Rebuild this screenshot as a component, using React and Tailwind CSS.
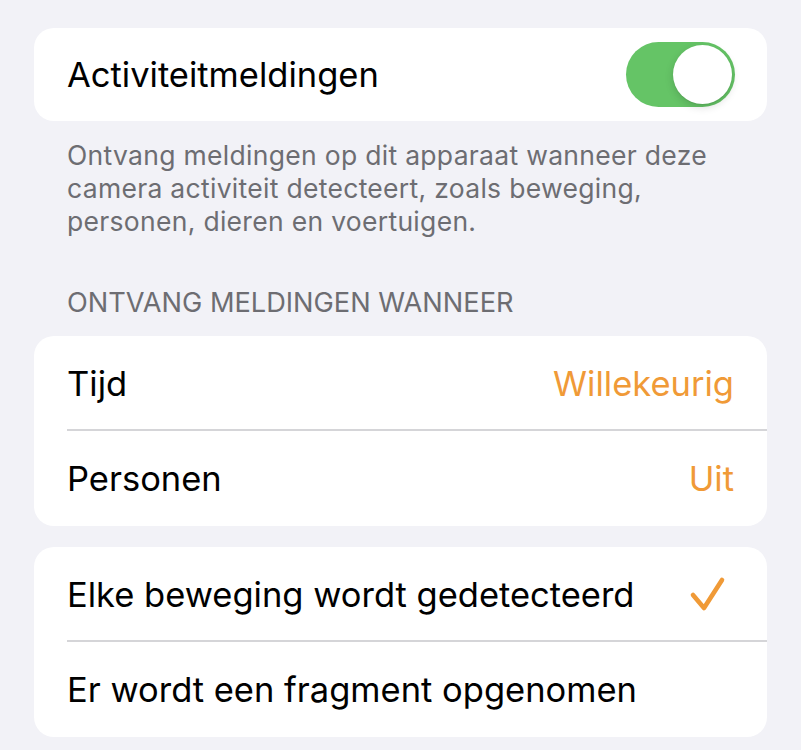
import React from "react";

function Toggle() {
  return (
    <div className="relative w-[109px] h-[65px] rounded-full bg-[#65c466]">
      <div className="absolute right-[3px] top-[3px] w-[59px] h-[59px] rounded-full bg-white shadow-[0_3px_8px_rgba(0,0,0,0.15),0_1px_1px_rgba(0,0,0,0.06)]" />
    </div>
  );
}

function Check() {
  return (
    <svg width="40" height="40" viewBox="0 0 40 40" className="block">
      <path d="M5 20 L16 33 L34 5" fill="none" stroke="#f09a37" strokeWidth="4.6" strokeLinecap="round" strokeLinejoin="round" />
    </svg>
  );
}

function Row({ label, value, children, sep }) {
  return (
    <div className="relative h-[95px] flex items-center justify-between pl-[33px] pr-[33px]">
      <span className="text-[34.5px] text-black">{label}</span>
      {value && <span className="text-[34.5px] text-[#f09a37]">{value}</span>}
      {children}
      {sep && <div className="absolute left-[33px] right-0 bottom-0 h-[2px] bg-[#d5d5d8]" />}
    </div>
  );
}

export default function App() {
  return (
    <div
      className="min-h-[750px] w-[801px] bg-[#f2f2f7] px-[34px] pt-[28px] overflow-hidden"
      style={{ fontFamily: "Inter, 'Noto Sans', sans-serif" }}
    >
      <div className="h-[93px] rounded-[20px] bg-white flex items-center justify-between pl-[33px] pr-[32px]">
        <span className="text-[34.5px] text-black">Activiteitmeldingen</span>
        <Toggle />
      </div>
      <p className="pl-[33px] pr-[10px] pt-[18px] text-[26.5px] leading-[33px] tracking-[0.3px] text-[#6d6d72]">
        Ontvang meldingen op dit apparaat wanneer deze camera activiteit detecteert, zoals beweging, personen, dieren en voertuigen.
      </p>
      <div className="pl-[33px] pt-[48px] pb-[17px] text-[27.2px] leading-[33px] text-[#6d6d72]">
        ONTVANG MELDINGEN WANNEER
      </div>
      <div className="rounded-[20px] bg-white overflow-hidden">
        <Row label="Tijd" value="Willekeurig" sep />
        <Row label="Personen" value="Uit" />
      </div>
      <div className="mt-[21px] rounded-[20px] bg-white overflow-hidden">
        <Row label="Elke beweging wordt gedetecteerd" sep>
          <div className="mr-[6px]">
            <Check />
          </div>
        </Row>
        <Row label="Er wordt een fragment opgenomen" />
      </div>
    </div>
  );
}
